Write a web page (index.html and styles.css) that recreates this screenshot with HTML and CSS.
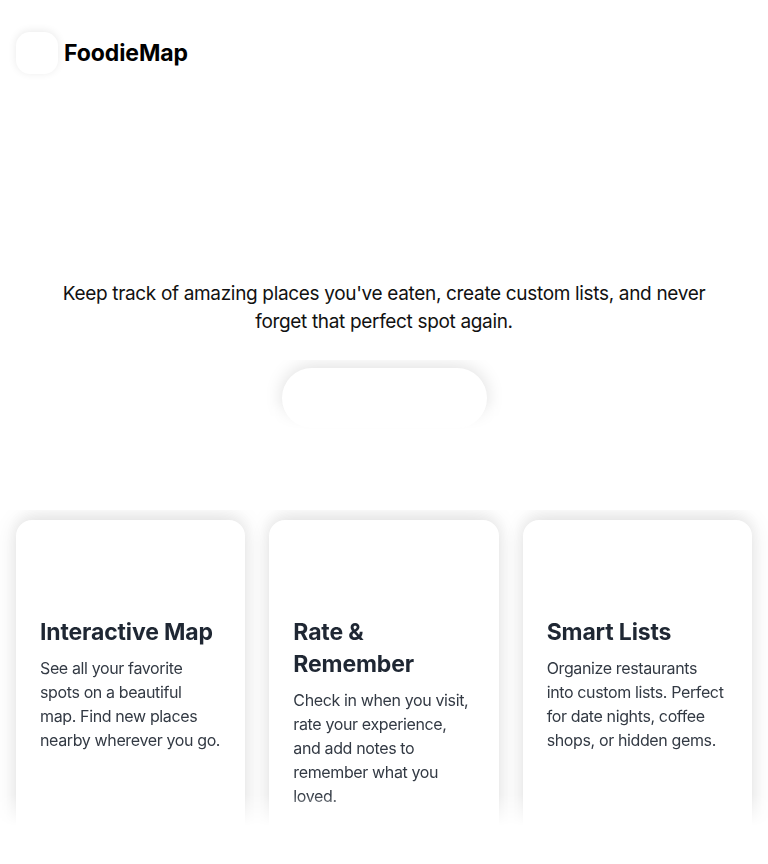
FILE: index.html
```html
<!DOCTYPE html>
<html lang="en">
<head>
<meta charset="utf-8">
<title>FoodieMap</title>
<link rel="stylesheet" href="styles.css">
</head>
<body>
<header class="header">
  <div class="logo-box"></div>
  <span class="brand">FoodieMap</span>
</header>
<section class="hero">
  <p class="subtitle">Keep track of amazing places you've eaten, create custom lists, and never forget that perfect spot again.</p>
  <div class="cta-clip">
    <div class="cta"></div>
  </div>
</section>
<section class="features">
  <div class="card">
    <div class="card-icon"></div>
    <h3 class="card-title">Interactive Map</h3>
    <p class="card-text">See all your favorite spots on a beautiful map. Find new places nearby wherever you go.</p>
  </div>
  <div class="card">
    <div class="card-icon"></div>
    <h3 class="card-title">Rate &amp; Remember</h3>
    <p class="card-text">Check in when you visit, rate your experience, and add notes to remember what you loved.</p>
  </div>
  <div class="card">
    <div class="card-icon"></div>
    <h3 class="card-title">Smart Lists</h3>
    <p class="card-text">Organize restaurants into custom lists. Perfect for date nights, coffee shops, or hidden gems.</p>
  </div>
</section>
</body>
</html>
```
FILE: styles.css
```css
html, body {
  margin: 0;
  padding: 0;
  background: #ffffff;
}
body {
  font-family: Inter, "Noto Sans", "Liberation Sans", sans-serif;
  color: #111111;
}
.header {
  display: flex;
  align-items: center;
  gap: 6px;
  padding: 32px 16px 0;
}
.logo-box {
  width: 42px;
  height: 42px;
  border-radius: 14px;
  background: #ffffff;
  box-shadow: 0 -1px 8px rgba(0, 0, 0, 0.09);
}
.brand {
  font-size: 23px;
  font-weight: 700;
  color: #000;
  letter-spacing: -0.1px;
}
.hero {
  display: flex;
  flex-direction: column;
  align-items: center;
  padding-top: 206px;
}
.subtitle {
  margin: 0;
  max-width: 680px;
  padding: 0 16px;
  text-align: center;
  font-size: 19px;
  line-height: 28px;
  letter-spacing: -0.33px;
  color: #111111;
}
.cta-clip {
  margin-top: 24px;
  width: 260px;
  height: 70px;
  overflow: hidden;
  display: flex;
  justify-content: center;
  padding-top: 8px;
  box-sizing: border-box;
  -webkit-mask-image: linear-gradient(to bottom, #000 60%, transparent 100%);
  mask-image: linear-gradient(to bottom, #000 60%, transparent 100%);
}
.cta {
  width: 205px;
  height: 60px;
  border-radius: 30px;
  background: #ffffff;
  box-shadow: 0 -2px 18px rgba(0, 0, 0, 0.13);
}
.features {
  margin-top: 80px;
  display: grid;
  grid-template-columns: repeat(3, 1fr);
  gap: 24px;
  padding: 10px 16px 0;
  height: 316px;
  box-sizing: border-box;
  overflow: hidden;
  -webkit-mask-image: linear-gradient(to bottom, #000 90%, transparent 100%);
  mask-image: linear-gradient(to bottom, #000 90%, transparent 100%);
}
.card {
  background: #ffffff;
  border-radius: 16px;
  padding: 24px;
  height: 340px;
  box-shadow: 0 0 24px rgba(0, 0, 0, 0.10), 0 -6px 16px rgba(0, 0, 0, 0.06);
}
.card-icon {
  height: 56px;
  margin-bottom: 16px;
}
.card-title {
  margin: 0 0 8px;
  font-size: 23px;
  line-height: 32px;
  font-weight: 700;
  letter-spacing: -0.15px;
  color: #1f2733;
}
.card-text {
  margin: 0;
  padding-right: 0.8px;
  font-size: 16px;
  line-height: 24px;
  letter-spacing: -0.37px;
  color: #333a44;
}
```
